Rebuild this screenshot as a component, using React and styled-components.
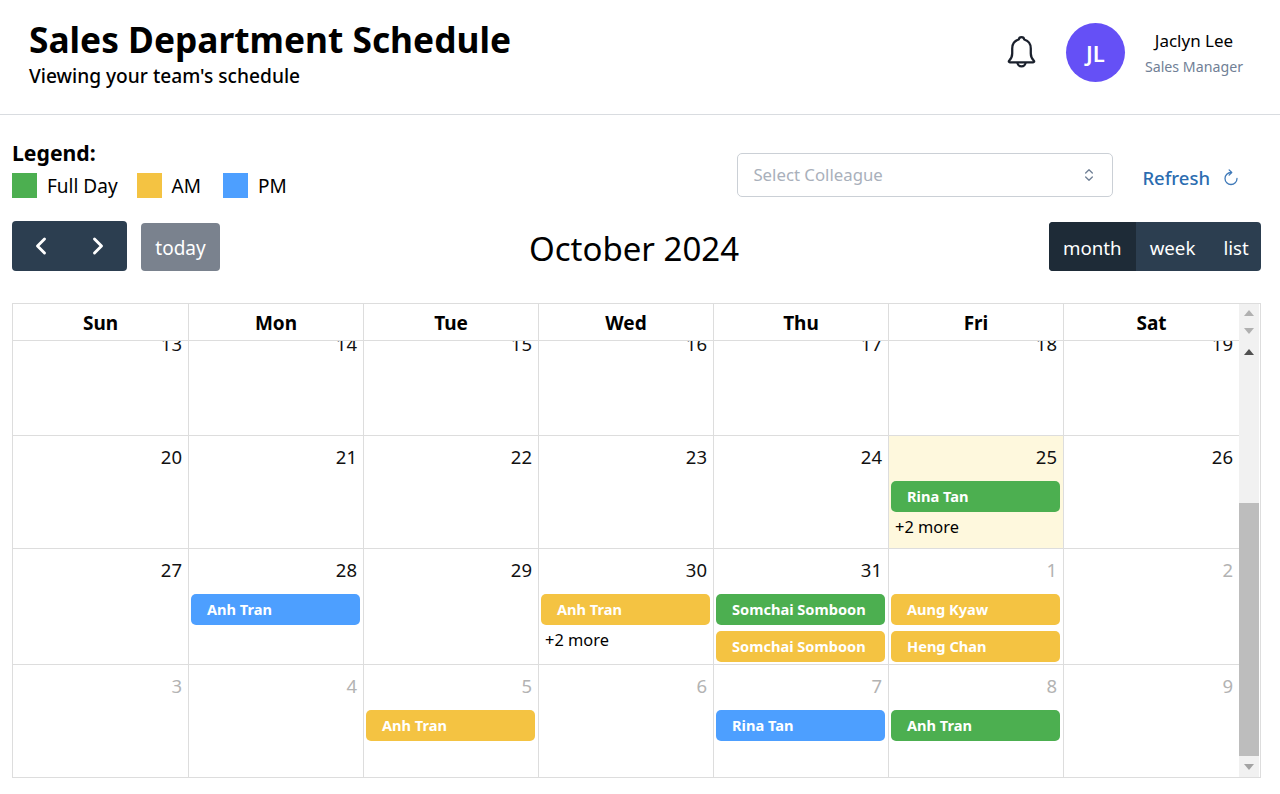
import React, { useLayoutEffect, useRef } from 'react'
import styled, { createGlobalStyle } from 'styled-components'
import { ChevronLeft, ChevronRight, ChevronsUpDown } from 'lucide-react'

const GREEN = '#4caf50'
const YELLOW = '#f4c342'
const BLUE = '#4d9fff'

const Global = createGlobalStyle`
  html, body { margin: 0; background: #fff; }
  body { font-family: "Noto Sans", "Open Sans", sans-serif; color: #000; overflow: hidden; }
  * { box-sizing: border-box; }
`

const Header = styled.header`
  height: 115px;
  border-bottom: 1px solid #d9dce0;
  display: flex;
  align-items: flex-start;
  justify-content: space-between;
  padding: 16px 37px 0 29px;
`
const Title = styled.h1`
  margin: 0;
  font-size: 35.3px;
  line-height: 47px;
  font-weight: 700;
`
const Subtitle = styled.div`
  font-size: 19.15px;
  line-height: 26px;
  font-weight: 500;
`
const UserBox = styled.div`
  display: flex;
  align-items: center;
  padding-top: 7px;
`
const BellIcon = styled.svg`
  width: 29px;
  height: 33px;
  margin-right: 30px;
  margin-bottom: 2px;
  fill: none;
  stroke: #1a202c;
  stroke-width: 2.2;
  stroke-linejoin: round;
`
const Avatar = styled.div`
  width: 59px;
  height: 59px;
  border-radius: 50%;
  background: #6550f6;
  color: #fff;
  font-size: 22px;
  font-weight: 600;
  display: flex;
  align-items: center;
  justify-content: center;
  margin-right: 20px;
`
const UserText = styled.div`
  display: flex;
  flex-direction: column;
  align-items: center;
  gap: 5px;
`
const UserName = styled.div`
  font-size: 17px;
  line-height: 23px;
`
const UserRole = styled.div`
  font-size: 14.2px;
  line-height: 20px;
  color: #718096;
`

const Content = styled.main`
  padding: 22px 19px 0 12px;
`
const TopRow = styled.div`
  display: flex;
  justify-content: space-between;
  align-items: flex-start;
`
const LegendTitle = styled.div`
  font-size: 21.2px;
  line-height: 32px;
  font-weight: 700;
`
const LegendItems = styled.div`
  display: flex;
  align-items: center;
  margin-top: 3px;
  height: 27px;
`
const Swatch = styled.span`
  width: 25px;
  height: 25px;
  background: ${p => p.$color};
  margin-right: 10px;
`
const LegendLabel = styled.span`
  font-size: 19px;
  line-height: 25px;
  margin-top: 2px;
  margin-right: ${p => p.$gap}px;
`
const Filters = styled.div`
  display: flex;
  align-items: center;
  margin-top: 16px;
  padding-right: 21px;
`
const SelectBox = styled.div`
  width: 376px;
  height: 44px;
  border: 1px solid #cbd0d6;
  border-radius: 5px;
  padding: 0 15px 1px;
  display: flex;
  align-items: center;
  justify-content: space-between;
  color: #a9b0bb;
  font-size: 16.8px;
`
const Refresh = styled.div`
  display: flex;
  align-items: center;
  margin-left: 29px;
  color: #2b6cb0;
  font-size: 18.5px;
  font-weight: 500;
  gap: 12px;
  margin-top: 4px;
`
const RefreshIcon = styled.svg`
  width: 18px;
  height: 18px;
  fill: none;
  stroke: #3f79b8;
  stroke-width: 1.7;
  stroke-linecap: round;
  stroke-linejoin: round;
`

const Toolbar = styled.div`
  display: grid;
  grid-template-columns: 1fr auto 1fr;
  align-items: center;
  margin-top: 19px;
  height: 50px;
`
const ToolLeft = styled.div`
  display: flex;
  align-items: center;
  gap: 14px;
`
const NavGroup = styled.div`
  width: 115px;
  height: 50px;
  display: flex;
  align-items: center;
  justify-content: space-around;
  background: #2c3e50;
  border-radius: 4px;
  color: #fff;
  padding: 0 1px;
`
const TodayButton = styled.div`
  width: 79px;
  height: 48px;
  margin-top: 2px;
  padding-top: 2px;
  border-radius: 4px;
  background: #7a828e;
  color: #fff;
  font-size: 19px;
  display: flex;
  align-items: center;
  justify-content: center;
`
const MonthTitle = styled.h2`
  margin: 0;
  padding: 6px 5px 0 0;
  font-size: 33px;
  font-weight: 400;
  line-height: 50px;
`
const ViewGroup = styled.div`
  justify-self: end;
  display: flex;
  width: 212px;
  height: 49px;
  border-radius: 4px;
  overflow: hidden;
  background: #2c3e50;
  color: #fff;
  font-size: 18.7px;
`
const ViewButton = styled.div`
  display: flex;
  align-items: center;
  padding: 3px 14px 0;
  background: ${p => (p.$active ? '#1e2b37' : 'transparent')};
`

const Calendar = styled.div`
  margin-top: 35px;
  width: 1249px;
  height: 475px;
  border: 1px solid #ddd;
  display: flex;
`
const CalendarMain = styled.div`
  width: 1226px;
  display: flex;
  flex-direction: column;
`
const DayHead = styled.div`
  height: 37px;
  flex: none;
  display: grid;
  grid-template-columns: 176px repeat(6, 175px);
  border-bottom: 1px solid #ddd;
`
const DayName = styled.div`
  border-right: 1px solid #ddd;
  display: flex;
  align-items: center;
  justify-content: center;
  padding-top: 1px;
  font-size: 19px;
  font-weight: 700;
  &:last-child { border-right: none; }
`
const Scroller = styled.div`
  flex: 1;
  overflow: hidden;
`
const Week = styled.div`
  display: grid;
  grid-template-columns: 176px repeat(6, 175px);
  height: ${p => p.$height}px;
  border-bottom: 1px solid #ddd;
  &:last-child { border-bottom: none; }
`
const Cell = styled.div`
  border-right: 1px solid #ddd;
  background: ${p => (p.$today ? '#fef8dd' : 'transparent')};
  padding: 8px 3px 0 2px;
  &:last-child { border-right: none; }
`
const DayNumber = styled.div`
  text-align: right;
  font-size: 18.5px;
  line-height: 26px;
  padding-right: 3px;
  color: ${p => (p.$muted ? '#b3b3b3' : '#111')};
`
const Events = styled.div`
  display: flex;
  flex-direction: column;
  gap: 6px;
  margin-top: 11px;
`
const Event = styled.div`
  height: 31px;
  border-radius: 5px;
  background: ${p => p.$color};
  color: #fff;
  font-size: 14.6px;
  font-weight: 700;
  padding: 0 0 2px 16px;
  display: flex;
  align-items: center;
`
const More = styled.div`
  font-size: 16.4px;
  line-height: 20px;
  padding-left: 4px;
  margin-top: -1px;
`

const Scrollbar = styled.div`
  width: 20px;
  background: #f1f1f1;
  display: flex;
  flex-direction: column;
  align-items: stretch;
`
const Arrow = styled.div`
  height: ${p => p.$height}px;
  flex: none;
  display: flex;
  align-items: center;
  justify-content: center;
  &::before {
    content: '';
    border-left: 5px solid transparent;
    border-right: 5px solid transparent;
    ${p => (p.$down ? 'border-top' : 'border-bottom')}: 6px solid ${p => p.$color};
  }
`
const Track = styled.div`
  flex: 1;
  display: flex;
  flex-direction: column;
  justify-content: flex-end;
`
const Thumb = styled.div`
  height: 253px;
  background: #bdbdbd;
`

const weeks = [
  {
    height: 113,
    days: [13, 14, 15, 16, 17, 18, 19].map(n => ({ n })),
  },
  {
    height: 113,
    days: [
      { n: 20 }, { n: 21 }, { n: 22 }, { n: 23 }, { n: 24 },
      { n: 25, today: true, events: [['Rina Tan', GREEN]], more: 2 },
      { n: 26 },
    ],
  },
  {
    height: 116,
    days: [
      { n: 27 },
      { n: 28, events: [['Anh Tran', BLUE]] },
      { n: 29 },
      { n: 30, events: [['Anh Tran', YELLOW]], more: 2 },
      { n: 31, events: [['Somchai Somboon', GREEN], ['Somchai Somboon', YELLOW]] },
      { n: 1, muted: true, events: [['Aung Kyaw', YELLOW], ['Heng Chan', YELLOW]] },
      { n: 2, muted: true },
    ],
  },
  {
    height: 112,
    days: [
      { n: 3, muted: true },
      { n: 4, muted: true },
      { n: 5, muted: true, events: [['Anh Tran', YELLOW]] },
      { n: 6, muted: true },
      { n: 7, muted: true, events: [['Rina Tan', BLUE]] },
      { n: 8, muted: true, events: [['Anh Tran', GREEN]] },
      { n: 9, muted: true },
    ],
  },
]

const dayNames = ['Sun', 'Mon', 'Tue', 'Wed', 'Thu', 'Fri', 'Sat']

const App = () => {
  const scroller = useRef(null)

  // the month grid opens scrolled down a little, like the real calendar
  useLayoutEffect(() => {
    scroller.current.scrollTop = 19
  }, [])

  return (
    <>
      <Global />
      <Header>
        <div>
          <Title>Sales Department Schedule</Title>
          <Subtitle>Viewing your team's schedule</Subtitle>
        </div>
        <UserBox>
          <BellIcon viewBox="0 0 28 32">
            <path d="M14 2c-1.5 0-2.5 1-2.7 2.4C7.5 5.6 5 9 5 13v5c0 3-1.5 5.5-3 7-.6.7-.2 1.5.7 1.5h22.6c.9 0 1.3-.8.7-1.5-1.5-1.5-3-4-3-7v-5c0-4-2.5-7.4-6.3-8.6C16.5 3 15.5 2 14 2z" />
            <path d="M10 26.5a4 4 0 0 0 8 0" />
          </BellIcon>
          <Avatar>JL</Avatar>
          <UserText>
            <UserName>Jaclyn Lee</UserName>
            <UserRole>Sales Manager</UserRole>
          </UserText>
        </UserBox>
      </Header>
      <Content>
        <TopRow>
          <div>
            <LegendTitle>Legend:</LegendTitle>
            <LegendItems>
              <Swatch $color={GREEN} /><LegendLabel $gap={19}>Full Day</LegendLabel>
              <Swatch $color={YELLOW} /><LegendLabel $gap={22}>AM</LegendLabel>
              <Swatch $color={BLUE} /><LegendLabel $gap={0}>PM</LegendLabel>
            </LegendItems>
          </div>
          <Filters>
            <SelectBox>
              Select Colleague
              <ChevronsUpDown size={16} color="#718096" />
            </SelectBox>
            <Refresh>
              Refresh
              <RefreshIcon viewBox="0 0 24 24">
                <path d="M12 6a8 8 0 1 0 8 8" />
                <path d="M9.5 2.5 13 6l-3.5 3.5" />
              </RefreshIcon>
            </Refresh>
          </Filters>
        </TopRow>
        <Toolbar>
          <ToolLeft>
            <NavGroup>
              <ChevronLeft size={28} strokeWidth={2.5} />
              <ChevronRight size={28} strokeWidth={2.5} />
            </NavGroup>
            <TodayButton>today</TodayButton>
          </ToolLeft>
          <MonthTitle>October 2024</MonthTitle>
          <ViewGroup>
            <ViewButton $active>month</ViewButton>
            <ViewButton>week</ViewButton>
            <ViewButton>list</ViewButton>
          </ViewGroup>
        </Toolbar>
        <Calendar>
          <CalendarMain>
            <DayHead>
              {dayNames.map(d => <DayName key={d}>{d}</DayName>)}
            </DayHead>
            <Scroller ref={scroller}>
              {weeks.map(week => (
                <Week key={week.days[0].n} $height={week.height}>
                  {week.days.map(day => (
                    <Cell key={day.n} $today={day.today}>
                      <DayNumber $muted={day.muted}>{day.n}</DayNumber>
                      {day.events && (
                        <Events>
                          {day.events.map(([name, color], i) => (
                            <Event key={i} $color={color}>{name}</Event>
                          ))}
                          {day.more && <More>+{day.more} more</More>}
                        </Events>
                      )}
                    </Cell>
                  ))}
                </Week>
              ))}
            </Scroller>
          </CalendarMain>
          <Scrollbar>
            <Arrow $height={18} $color="#b0b0b0" />
            <Arrow $height={18} $color="#b0b0b0" $down />
            <Arrow $height={24} $color="#505050" />
            <Track><Thumb /></Track>
            <Arrow $height={21} $color="#a3a3a3" $down />
          </Scrollbar>
        </Calendar>
      </Content>
    </>
  )
}

export default App
